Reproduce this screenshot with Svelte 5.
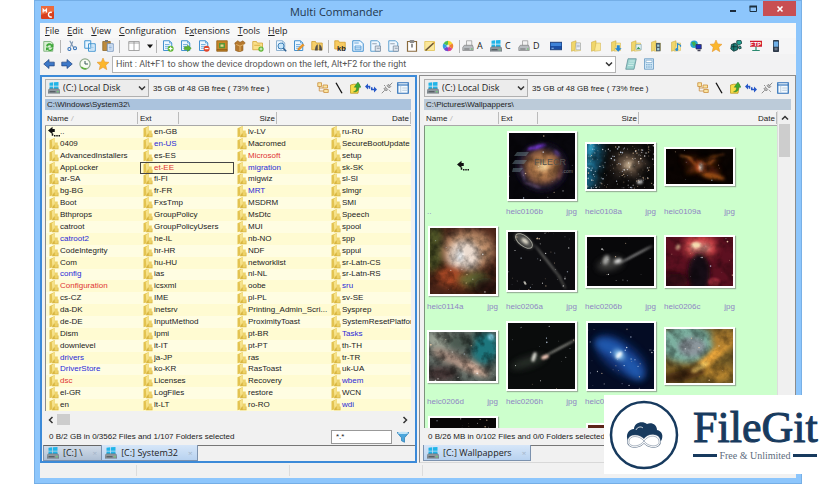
<script>
  const menus = ['File', 'Edit', 'View', 'Configuration', 'Extensions', 'Tools', 'Help'];

  const tools = [
    ['refresh', 'std'], ['sep'],
    ['cut', 'std'], ['copy', 'std'], ['paste', 'std'], ['sep'],
    ['panes', 'wide'], ['caret', 'thin'], ['sep'],
    ['pageAdd', 'std'], ['pageGo', 'std'], ['pageDel', 'std'], ['pack', 'std'], ['box', 'std'], ['folderAdd', 'std'], ['sep'],
    ['search', 'std'], ['pageEdit', 'std'], ['folderFind', 'std'], ['sep'],
    ['kb', 'std'], ['pageList', 'std'], ['pageCopy', 'std'], ['pageCopy', 'std'], ['clip', 'std'], ['wand', 'std'], ['wheel', 'std'], ['sep'],
    ['drive', 'drive', 'A'], ['winDrive', 'drive', 'C'], ['drive', 'drive', 'D'],
    ['screen', 'far'], ['fDoc', 'far'], ['fPlain', 'far'], ['fDown', 'far'], ['fPic', 'far'], ['fFilm', 'far'], ['fMusic', 'far'],
    ['net', 'far'], ['star', 'far'], ['reg', 'far'], ['ftp', 'far'], ['phone', 'far']
  ];

  const panelTools = ['tree', 'slash', 'up', 'swap', 'plug', 'view'];

  const blue = new Set(['en-US', 'migration', 'MRT', 'catroot2', 'config', 'drivers', 'DriverStore', 'sru', 'Tasks', 'wbem', 'wdi']);
  const red = new Set(['Microsoft', 'et-EE', 'Configuration', 'dsc']);

  const columns = [
    ['..', '0409', 'AdvancedInstallers', 'AppLocker', 'ar-SA', 'bg-BG', 'Boot', 'Bthprops', 'catroot', 'catroot2', 'CodeIntegrity', 'Com', 'config', 'Configuration', 'cs-CZ', 'da-DK', 'de-DE', 'Dism', 'downlevel', 'drivers', 'DriverStore', 'dsc', 'el-GR', 'en'],
    ['en-GB', 'en-US', 'es-ES', 'et-EE', 'fi-FI', 'fr-FR', 'FxsTmp', 'GroupPolicy', 'GroupPolicyUsers', 'he-IL', 'hr-HR', 'hu-HU', 'ias', 'icsxml', 'IME', 'inetsrv', 'InputMethod', 'Ipmi', 'it-IT', 'ja-JP', 'ko-KR', 'Licenses', 'LogFiles', 'lt-LT'],
    ['lv-LV', 'Macromed', 'Microsoft', 'migration', 'migwiz', 'MRT', 'MSDRM', 'MsDtc', 'MUI', 'nb-NO', 'NDF', 'networklist', 'nl-NL', 'oobe', 'pl-PL', 'Printing_Admin_Scri...', 'ProximityToast', 'pt-BR', 'pt-PT', 'ras', 'RasToast', 'Recovery', 'restore', 'ro-RO'],
    ['ru-RU', 'SecureBootUpdate', 'setup', 'sk-SK', 'sl-SI', 'slmgr', 'SMI', 'Speech', 'spool', 'spp', 'sppui', 'sr-Latn-CS', 'sr-Latn-RS', 'sru', 'sv-SE', 'Sysprep', 'SystemResetPlatform', 'Tasks', 'th-TH', 'tr-TR', 'uk-UA', 'wbem', 'WCN', 'wdi']
  ];

  // blobs: cx, cy, rx, ry, colour, opacity, rotation, blur
  const thumbs = [
    { up: true, name: '..' },
    { name: 'heic0106b', w: 66, h: 66, bg: '#08070c', stars: 12, seed: 3, tex: .35, mark: true, blobs: [
      [33, 34, 25, 24, '#1c1830', 1, 0, 3], [33, 34, 20, 18, '#6a4438', 1, 0, 3], [34, 34, 16, 14, '#b47a4c', 1, 0, 4], [34, 33, 6, 5, '#ffdca0', 1, 0, 3],
      [28, 14, 10, 2, '#7a3ae0', .9, -14, 1], [48, 20, 4, 2, '#6d4cb0', .7, 40, 1], [14, 40, 1, 8, '#9080c8', .7, -12, 1], [23, 52, 9, 1, '#a080b0', .6, 18, 1], [51, 40, 2, 7, '#804848', .7, 10, 1]] },
    { name: 'heic0108a', w: 67, h: 45, bg: '#100e0e', stars: 170, seed: 9, tex: .5, blobs: [
      [4, 18, 10, 34, '#12688c', .9, 10, 5], [3, 10, 3, 18, '#3ab0d8', .8, 5, 2], [42, 20, 16, 12, '#7c6450', .7, 0, 5], [42, 21, 5, 4, '#f4dcb8', .8, 0, 3], [53, 38, 3, 2, '#fff', .8, 0, 1]] },
    { name: 'heic0109a', w: 67, h: 35, bg: '#0a0402', stars: 8, seed: 4, tex: .5, blobs: [
      [36, 18, 20, 6, '#5c2408', .9, 24, 4], [36, 16, 18, 4, '#6c300c', .8, -24, 3], [46, 27, 13, 3, '#b05a18', .8, 12, 2], [20, 8, 7, 1, '#b06828', .8, 14, 1], [50, 7, 9, 1, '#904818', .7, -12, 1], [26, 12, 6, 1, '#b86424', .7, 44, 1], [45, 13, 5, 1, '#a85c20', .7, -44, 1],
      [35, 18, 5, 6, '#e0602c', .8, 0, 2], [35, 18, 2, 4, '#ffe8d8', 1, 0, 1]] },
    { name: 'heic0114a', w: 66, h: 66, bg: '#4a2418', stars: 14, seed: 7, tex: .45, blobs: [
      [4, 20, 10, 26, '#50602a', .8, 0, 4], [38, 22, 26, 20, '#c0906c', 1, 0, 5], [34, 28, 16, 16, '#ecdcd0', 1, 0, 4], [24, 50, 20, 10, '#b04c28', .9, 10, 4], [44, 52, 16, 8, '#5a7038', .8, 0, 4], [30, 28, 4, 6, '#fff', .9, 0, 2], [56, 58, 12, 8, '#20100c', .8, 0, 4]] },
    { name: 'heic0206a', w: 67, h: 58, bg: '#0d0d10', stars: 40, seed: 12, blobs: [
      [16, 9, 11, 5, '#5c5c58', .9, 38, 2], [17, 9, 4, 2, '#f0ead8', .9, 38, 1], [40, 30, 22, 1, '#80807c', .8, 52, 1], [54, 50, 8, 1, '#60605c', .8, 62, 1], [17, 51, 2, 1, '#e8e4d8', .9, 60, 0]] },
    { name: 'heic0206b', w: 67, h: 49, bg: '#08080a', stars: 16, seed: 15, blobs: [
      [48, 18, 20, 1, '#a0a0a0', .9, -28, 1], [23, 27, 13, 6, '#444442', .9, -14, 4], [19, 23, 3, 5, '#c8c8c4', .8, 20, 2], [31, 24, 4, 2, '#f0f0ee', 1, -20, 2]] },
    { name: 'heic0206c', w: 67, h: 49, bg: '#5c1020', stars: 14, seed: 20, tex: .3, blobs: [
      [34, 10, 17, 13, '#d8484c', .9, 0, 4], [34, 11, 11, 5, '#f0b0a0', .7, 0, 3], [33, 36, 11, 20, '#160a14', 1, 0, 3], [30, 8, 5, 3, '#f8e8b8', .9, 0, 1], [12, 10, 2, 3, '#f0c8a0', .8, 20, 1], [8, 44, 14, 8, '#300812', .9, 0, 3], [48, 45, 6, 4, '#a83040', .9, 0, 1]] },
    { name: 'heic0206d', w: 67, h: 49, bg: '#606a64', stars: 12, seed: 22, tex: .5, blobs: [
      [56, 16, 14, 16, '#187880', .9, 0, 4], [10, 8, 14, 10, '#a8b0a0', .8, 0, 4], [32, 10, 14, 7, '#4a5850', .9, 0, 3], [26, 28, 26, 6, '#b89888', .9, 24, 4], [46, 37, 15, 4, '#fcd0b8', 1, 26, 3], [12, 42, 16, 8, '#4c3838', .9, 0, 4], [62, 5, 3, 3, '#90e0f8', .8, 0, 1]] },
    { name: 'heic0206h', w: 67, h: 66, bg: '#0a0c0c', stars: 16, seed: 27, blobs: [
      [52, 25, 18, 1, '#a0a098', .9, -28, 1], [20, 39, 18, 5, '#2a302c', .9, -18, 4], [26, 34, 2, 5, '#d4d4cc', 1, 18, 1], [37, 34, 4, 2, '#f0c8b8', 1, -20, 1]] },
    { name: 'heic0301a', w: 66, h: 66, bg: '#040c24', stars: 34, seed: 31, blobs: [
      [33, 34, 30, 14, '#123c8c', .9, 38, 5], [22, 24, 16, 7, '#2460b8', .8, 20, 4], [44, 44, 16, 7, '#2460b8', .8, 50, 4], [31, 32, 6, 4, '#a8e0ff', 1, 40, 3], [31, 32, 2, 4, '#fff', .9, 40, 1]] },
    { name: 'heic0305a', w: 67, h: 54, bg: '#7a6028', stars: 8, seed: 35, tex: .35, blobs: [
      [20, 14, 28, 20, '#7cb0a0', 1, 0, 4], [26, 18, 14, 10, '#90909c', .8, 0, 3], [46, 28, 28, 5, '#f4ac3c', 1, -42, 3], [58, 10, 12, 9, '#b88430', .9, 0, 4], [18, 46, 24, 6, '#3c2408', .9, -14, 3], [52, 44, 14, 8, '#c89030', .8, 0, 3], [34, 38, 10, 3, '#f8d068', .9, -30, 2]] },
    { name: 'heic0307a', w: 66, h: 66, bg: '#080606', stars: 50, seed: 40, blobs: [] },
    { name: 'heic0312a', w: 66, h: 35, bg: '#0a0a0c', stars: 20, seed: 41, blobs: [] },
    { name: 'heic0401a', w: 66, h: 52, bg: '#5c2418', stars: 10, seed: 42, blobs: [] }
  ];

  function starField(t) {
    let s = t.seed * 7919 + 13;
    const next = () => ((s = (s * 16807) % 2147483647) / 2147483647);
    next();
    const tones = ['#ffffff', '#d8e8ff', '#ffdcb4'];
    return Array.from({ length: t.stars }, () => ({
      x: next() * t.w, y: next() * t.h, r: 0.25 + next() * 0.6, o: 0.3 + next() * 0.6, c: tones[Math.floor(next() * 3)]
    }));
  }
</script>

{#snippet page(color = '#3f8fd0')}
  <path d="M2 1h8l3 3v10H2z" fill="#eef7ff" stroke={color} stroke-width="1.3" />
  <path d="M10 1v3h3M4 6h6M4 8.500h6M4 11h4" fill="none" stroke={color} stroke-width=".9" />
{/snippet}

{#snippet folder()}
  <path d="M2 3l6-2v12l-6 2z" fill="#f0d66a" stroke="#c9a73c" stroke-width=".7" />
  <path d="M8 4h6v10l-8 1z" fill="#fbe998" stroke="#d3b54c" stroke-width=".7" />
{/snippet}

{#snippet winlogo()}
  <path d="M2 1l5-.6V5H2zM8 .3L14 0v5H8zM2 6h5v4.400L2 10zM8 6h6v5l-6-.5z" fill="#20b4e8" />
{/snippet}

{#snippet icon(kind)}
  <svg class="ico" viewBox="0 0 16 16" aria-hidden="true">
    {#if kind === 'refresh'}
      <path d="M1 2h9l3 2v11H1z" fill="#d9efd2" stroke="#6aa56a" />
      <path d="M4 8a4.500 4.500 0 0 1 8-2l2-1v5H9l2-2a3 3 0 0 0-5 1zM14 11a4.500 4.500 0 0 1-8 2l-2 1v-4h5l-2 2a3 3 0 0 0 5-1z" fill="#3fa83a" />
    {:else if kind === 'cut'}
      <path d="M5 1l5 9M9 2L6 9" stroke="#7c95b2" stroke-width="1.500" />
      <circle cx="4.500" cy="12" r="2" fill="none" stroke="#2f6db4" stroke-width="1.400" /><circle cx="12" cy="11" r="2" fill="none" stroke="#2f6db4" stroke-width="1.400" />
    {:else if kind === 'copy'}
      <path d="M1 1h8v10H1zM6 5h9v10H6z" fill="#eaf6ff" stroke="#3e93d0" stroke-width="1.300" />
      <path d="M8 8h5M8 10h5M8 12h5" stroke="#8cc0e6" />
    {:else if kind === 'paste'}
      <path d="M1 2h10v12H1z" fill="#bd8a3c" stroke="#8a6424" /><path d="M4 0h4v3H4z" fill="#777" />
      <path d="M7 5h8v10H7z" fill="#e3eefa" stroke="#5b83b4" /><path d="M9 8h4M9 10h4M9 12h4" stroke="#7aa2d0" />
    {:else if kind === 'panes'}
      <path d="M1 2h14v12H1z" fill="#fff" stroke="#8b8b8b" /><path d="M8 2v12M1 4h14" stroke="#8b8b8b" />
    {:else if kind === 'caret'}
      <path d="M4 6h8l-4 5z" fill="#111" />
    {:else if kind === 'pageAdd'}
      {@render page()}<circle cx="11.500" cy="11.500" r="4" fill="#5cb531" /><path d="M11.500 9v5M9 11.500h5" stroke="#fff" stroke-width="1.500" />
    {:else if kind === 'pageGo'}
      {@render page()}<path d="M6 9h4V6.500l5 4.500-5 4.500V13H6z" fill="#5cb531" stroke="#3a8a1c" stroke-width=".6" />
    {:else if kind === 'pageDel'}
      {@render page()}<circle cx="11.500" cy="11.500" r="4" fill="#e0442c" /><path d="M9 11.500h5" stroke="#fff" stroke-width="1.600" />
    {:else if kind === 'pack'}
      <path d="M1 1h14v14H1z" fill="#c68628" stroke="#8c5a14" /><path d="M4 4h8v7H4z" fill="#56963a" /><path d="M6 6h4v3H6z" fill="#e8d890" /><path d="M1 13h14" stroke="#7c4c10" />
    {:else if kind === 'box'}
      <path d="M1 4l4-3 3 2 4-2 3 3-3 3v7l-5 2-5-2V7z" fill="#b5782e" stroke="#855216" stroke-width=".7" /><path d="M3 6l5 2 5-2M8 8v7" fill="none" stroke="#f0c478" />
    {:else if kind === 'folderAdd'}
      <path d="M1 2h5l1 2h7v9H1z" fill="#fae08a" stroke="#d0a030" /><path d="M3 7h8" stroke="#d0a030" /><circle cx="12" cy="12" r="3.500" fill="#5cb531" /><path d="M12 10v4M10 12h4" stroke="#fff" />
    {:else if kind === 'search'}
      {@render page('#8ab0d0')}<circle cx="8" cy="8" r="4" fill="#c9e6fa" stroke="#3d7fb8" stroke-width="1.300" /><path d="M11 11l4 4" stroke="#2d5f90" stroke-width="2" />
    {:else if kind === 'pageEdit'}
      {@render page()}<path d="M7 11l6-6 2 2-6 6-3 1z" fill="#f09a28" stroke="#b86a10" stroke-width=".5" />
    {:else if kind === 'folderFind'}
      <path d="M1 2h5l1 2h8v9H1z" fill="#f5cf6a" stroke="#c99a2c" /><path d="M6 9l2-3h1v8H5zM14 9l-2-3h-1v8h4z" fill="#55514a" />
    {:else if kind === 'kb'}
      <path d="M1 1h5l1 2h8v9H1z" fill="#f7cb62" stroke="#cf9b2a" /><text x="4" y="14" font-size="10" font-weight="700" fill="#222">kb</text>
    {:else if kind === 'pageList'}
      <path d="M1 1h10l4 4v10H1z" fill="#eef7ff" stroke="#3f8fd0" stroke-width="1.300" /><path d="M4 8h8v5H4zM4 10.500h8M3 4h6" fill="none" stroke="#3f8fd0" />
    {:else if kind === 'pageCopy'}
      <path d="M1 1h9l3 3v11H1z" fill="#eef7ff" stroke="#4f97cc" stroke-width="1.200" /><path d="M7 8h7v7H7z" fill="#dfe6ee" stroke="#77879a" /><path d="M9 11h4M3 5h6" stroke="#77879a" />
    {:else if kind === 'clip'}
      <path d="M2 2h12v13H2z" fill="#fff" stroke="#8a6a3c" stroke-width="1.600" /><path d="M5 0h6v4H5z" fill="#8c8c8c" /><path d="M8 5v5" stroke="#333" stroke-width="1.400" />
    {:else if kind === 'wand'}
      <path d="M1 2h13v12H1z" fill="#fbe79a" stroke="#e0c04e" /><path d="M2 14L13 4" stroke="#6b5636" stroke-width="2.200" /><path d="M11 1l1 2 3 0-2 2" fill="#f0a020" />
    {:else if kind === 'wheel'}
      <path d="M8 8V1a7 7 0 0 1 6 3.500z" fill="#f2d52c" /><path d="M8 8l6-3.500a7 7 0 0 1 0 7z" fill="#f08030" /><path d="M8 8l6 3.500A7 7 0 0 1 8 15z" fill="#d84090" />
      <path d="M8 8v7a7 7 0 0 1-6-3.500z" fill="#7048d0" /><path d="M8 8l-6 3.500a7 7 0 0 1 0-7z" fill="#30a0e0" /><path d="M8 8L2 4.500A7 7 0 0 1 8 1z" fill="#50c050" /><circle cx="8" cy="8" r="2" fill="#fff" opacity=".7" />
    {:else if kind === 'drive'}
      <path d="M6 1h7v7H6z" fill="#f2f2f2" stroke="#999" /><path d="M1 10l2-3h11l1 3v4H1z" fill="#b8bcc0" stroke="#777" stroke-width=".8" /><path d="M3 12h7" stroke="#555" /><path d="M12 12h2" stroke="#3c3" />
    {:else if kind === 'winDrive'}
      {@render winlogo()}<path d="M0 11l2-2h12l2 2v4H0z" fill="#8e979e" stroke="#5b646a" stroke-width=".6" /><path d="M2 13h8" stroke="#30373c" /><path d="M12 13h2" stroke="#5f5" />
    {:else if kind === 'screen'}
      <path d="M0 3h16v10H0z" fill="#1c4fa4" stroke="#17376c" /><path d="M1 4h14v4H1z" fill="#3f83d8" /><path d="M2 11h3" stroke="#bfe0ff" />
    {:else if kind === 'fDoc'}
      {@render folder()}<path d="M8 4h6v9H8z" fill="#eef2f8" stroke="#9aa6b8" stroke-width=".8" /><path d="M9 7h4M9 9h4" stroke="#9aa6b8" />
    {:else if kind === 'fPlain'}
      {@render folder()}
    {:else if kind === 'fDown'}
      {@render folder()}<path d="M9 7h4v4h2.500L11 15.500 6.500 11H9z" fill="#2585d4" />
    {:else if kind === 'fPic'}
      {@render folder()}<path d="M8 6h7v7H8z" fill="#dff0f4" stroke="#7aa0a8" stroke-width=".8" /><path d="M9 12l2-3 3 3z" fill="#3c9a58" />
    {:else if kind === 'fFilm'}
      {@render folder()}<path d="M8 4h6v11H8z" fill="#4c5c66" /><path d="M9.500 6h3v3h-3zM9.500 10.500h3v3h-3z" fill="#a8d0d8" />
    {:else if kind === 'fMusic'}
      {@render folder()}<path d="M10 12V5l4 2v2" fill="none" stroke="#2a8ad0" stroke-width="1.600" /><circle cx="9" cy="12.500" r="2" fill="#2a8ad0" />
    {:else if kind === 'net'}
      <circle cx="5.500" cy="5.500" r="5" fill="#28a4d0" /><path d="M2 3l4-1 2 3-3 4z" fill="#3eb04c" /><path d="M8 6h7v6H8z" fill="#1b2fc0" stroke="#334" /><path d="M10 14h4" stroke="#445" stroke-width="2" />
    {:else if kind === 'star'}
      <path d="M8 0l2.300 5.200 5.700.6-4.300 3.800L13 15.500 8 12.400 3 15.500l1.300-5.900L0 5.800l5.700-.6z" fill="#fbb62c" stroke="#e3922a" stroke-width=".7" />
    {:else if kind === 'reg'}
      <path d="M2 6l5-2 3 3v6l-5 2-4-3z" fill="#1d7d78" stroke="#0a2c2c" /><path d="M9 1l5-1 2 4-4 3-3-2zM11 9l3-1 1 3-3 1z" fill="#26a496" stroke="#0a2c2c" /><path d="M2 9h7M5 5v9" stroke="#0a2c2c" />
    {:else if kind === 'ftp'}
      <path d="M0 1h16v8H0z" fill="#d01c30" /><text x="0" y="8" font-size="8" font-weight="700" fill="#fff">FTP</text><path d="M8 9v5M3 14h10" stroke="#2b8a70" stroke-width="1.600" />
    {:else if kind === 'phone'}
      <rect x="4" y="0" width="8" height="16" rx="1" fill="#2c3848" /><path d="M5 2h6v7H5z" fill="#6fb0e8" /><path d="M6 11h4M6 13h4" stroke="#9ab" />
    {:else if kind === 'back'}
      <path d="M1 8l7-6v3.500h7v5H8V14z" fill="#3d78c8" stroke="#1d3e7c" stroke-width=".9" />
    {:else if kind === 'forward'}
      <path d="M15 8L8 2v3.500H1v5h7V14z" fill="#3d78c8" stroke="#1d3e7c" stroke-width=".9" />
    {:else if kind === 'clock'}
      <circle cx="8" cy="8" r="6.800" fill="#f7fbf2" stroke="#8ca888" stroke-width="1.500" /><path d="M8 4v4h4" fill="none" stroke="#355" stroke-width="1.300" /><path d="M3 12a6.800 6.800 0 0 0 7 2" fill="none" stroke="#5db33c" stroke-width="2" />
    {:else if kind === 'note'}
      <path d="M4 1h11l-3 14H1z" fill="#9ed4d0" stroke="#5a8c94" /><path d="M6 4h7M5 7h7M4 10h7" stroke="#d9f2f0" />
    {:else if kind === 'calc'}
      <path d="M2 1h12v14H2z" fill="#cfe6f6" stroke="#5d93bd" /><path d="M4 3h8v3H4z" fill="#fff" stroke="#5d93bd" stroke-width=".7" /><path d="M4 9h8M4 12h8" stroke="#6ea2c8" stroke-width="1.500" stroke-dasharray="2 1" />
    {:else if kind === 'tree'}
      <path d="M1 1h5v5H1zM8 4h6v4H8zM9 10h6v4H9z" fill="#fbe6a4" stroke="#c88a34" /><path d="M3 6v6h6M3 8h5" fill="none" stroke="#c88a34" />
    {:else if kind === 'slash'}
      <path d="M4 1l8 14" stroke="#111" stroke-width="1.700" />
    {:else if kind === 'up'}
      <path d="M2 4l4-1h8l-2 12H2z" fill="#f7dc48" stroke="#b89420" /><path d="M6 13c4-1 4-4 4-6H7l5-7 4 7h-3c0 4-2 7-7 6z" fill="#39a835" stroke="#1c6c1c" stroke-width=".5" />
    {:else if kind === 'swap'}
      <path d="M0 6l4-4v3h3v4H5V7H4v3zM16 10l-4 4v-3H8V7h2v2h2V6z" fill="#2456c8" />
    {:else if kind === 'plug'}
      <path d="M1 15l4-4M11 5l4-4M4 9l3 3 2-2-3-3zM8 5l3 3 2-2-3-3zM4 4l2 2M11 11l2 2" fill="#b9b9b9" stroke="#858585" stroke-width="1.200" />
    {:else if kind === 'view'}
      <path d="M1 1h14v14H1z" fill="#f4faff" stroke="#2c6fb8" stroke-width="1.600" /><path d="M1 4h14" stroke="#2c6fb8" stroke-width="1.500" /><path d="M5 5v9M7 8h7M7 11h7" stroke="#a8bfd4" />
    {:else if kind === 'folder'}
      <path d="M2 3l7-3v13l-7 2z" fill="#e3c350" /><path d="M5 3l4-3v12l-3 2z" fill="#f6e28a" /><path d="M8 10h6v5H5z" fill="#d9b640" /><path d="M9 6h4v8H9z" fill="#edd26a" />
    {:else if kind === 'funnel'}
      <path d="M0 2h16l-6 7v6l-4-2V9z" fill="#4aa6dc" stroke="#2b7db4" /><ellipse cx="8" cy="2.500" rx="7" ry="1.500" fill="#bfe4f8" />
    {:else if kind === 'parent'}
      <path d="M0 6l6-5v3h3v4H6v3zM8 12h2v2H8zM11 12h2v2h-2zM14 12h2v2h-2zM5 10h2v3H5z" fill="#111" />
    {/if}
  </svg>
{/snippet}

{#snippet chevron()}
  <svg class="chev" viewBox="0 0 8 8" aria-hidden="true"><path d="M1 2.500l3 3 3-3" fill="none" stroke="#333" stroke-width="1.500" /></svg>
{/snippet}

{#snippet driveRow(id)}
  <div class="driverow">
    <div class="combo">
      {@render icon('winDrive')}
      <select {id} aria-label="Device"><option>(C:) Local Disk</option></select>
      {@render chevron()}
    </div>
    <span class="free">35 GB of 48 GB free ( 73% free )</span>
    <div class="ptools">
      {#each panelTools as t}<button aria-label={t}>{@render icon(t)}</button>{/each}
    </div>
  </div>
{/snippet}

{#snippet heads(cls)}
  <div class="heads {cls}">
    <button class="hname">Name <i>/</i></button><button class="hext">Ext</button><button class="hsize">Size</button><button class="hdate">Date</button>
  </div>
{/snippet}

<div class="window">
  <header class="title">
    <svg class="app" viewBox="0 0 12 12" aria-hidden="true">
      <rect width="12" height="12" rx="1" fill="#d8401c" /><path d="M0 0h12v5L0 8z" fill="#ec6a3c" />
      <path d="M2 6V3l1.500 1.500L5 3v3" fill="none" stroke="#fff" stroke-width="1.200" /><path d="M10 6a2.200 2.200 0 1 0 0 4" fill="none" stroke="#fff" stroke-width="1.300" />
    </svg>
    <h1>Multi Commander</h1>
    <div class="winbtns">
      <button aria-label="Minimize"><svg viewBox="0 0 10 8"><path d="M2 6h6" stroke="#1b2b3c" stroke-width="2" /></svg></button>
      <button aria-label="Maximize"><svg viewBox="0 0 10 8"><path d="M2 1.500h6.500v5H2z" fill="none" stroke="#1b3040" /><path d="M1.500 1.500h7.500" stroke="#1b3040" stroke-width="2" /></svg></button>
      <button class="close" aria-label="Close"><svg viewBox="0 0 10 8"><path d="M2.500 1.500l5 5M7.500 1.500l-5 5" stroke="#fff" stroke-width="1.600" /></svg></button>
    </div>
  </header>

  <div class="client">
    <nav class="menu">
      {#each menus as m}
        <button>{#if m === 'Extensions'}E<u>x</u>tensions{:else}<u>{m[0]}</u>{m.slice(1)}{/if}</button>
      {/each}
    </nav>

    <div class="toolbar">
      {#each tools as [kind, size, label]}
        {#if kind === 'sep'}
          <span class="sep"></span>
        {:else}
          <button class={size} aria-label={label ? `Drive ${label}` : kind}>{@render icon(kind)}{#if label}<span>{label}</span>{/if}</button>
        {/if}
      {/each}
    </div>

    <div class="address">
      {#each ['back', 'forward', 'clock', 'star'] as k}<button class="std" aria-label={k}>{@render icon(k)}</button>{/each}
      <div class="hint">
        <select aria-label="Command line"><option>Hint : Alt+F1 to show the device dropdown on the left, Alt+F2 for the right</option></select>
        {@render chevron()}
      </div>
      {#each ['note', 'calc'] as k}<button class="std" aria-label={k}>{@render icon(k)}</button>{/each}
    </div>

    <main class="panels">
      <section class="panel active">
        {@render driveRow('dev-left')}
        <div class="path">C:\Windows\System32\</div>
        {@render heads('hl')}
        <div class="files">
          {#each columns as col}
            <ul>
              {#each col as f}
                <li class:blue={blue.has(f)} class:red={red.has(f)} class:cursor={f === 'et-EE'}>
                  {@render icon(f === '..' ? 'parent' : 'folder')}<span>{f}</span>
                </li>
              {/each}
            </ul>
          {/each}
        </div>
        <div class="hscroll">
          <svg viewBox="0 0 8 8" aria-hidden="true"><path d="M5.500 1l-3 3 3 3" fill="none" stroke="#333" stroke-width="1.500" /></svg>
          <span class="hthumb"></span>
          <svg class="end" viewBox="0 0 8 8" aria-hidden="true"><path d="M2.500 1l3 3-3 3" fill="none" stroke="#333" stroke-width="1.500" /></svg>
        </div>
        <div class="info">
          <span>0 B/2 GB in 0/3562 Files and 1/107 Folders selected</span>
          <input aria-label="Filter" value="*.*" />
          <button aria-label="Apply filter">{@render icon('funnel')}</button>
        </div>
        <div class="tabs">
          <button class="tab off">{@render icon('winDrive')}<span>[C:] \</span><b>×</b></button>
          <button class="tab">{@render icon('winDrive')}<span>[C:] System32</span><b>×</b></button>
          <span class="rest"></span>
        </div>
      </section>

      <section class="panel">
        {@render driveRow('dev-right')}
        <div class="path dim">C:\Pictures\Wallpappers\</div>
        <div class="body">
          <div class="listcol">
            {@render heads('hr')}
            <div class="thumbs">
              {#each thumbs as t, i}
                <figure>
                  <div class="frame">
                    {#if t.up}
                      {@render icon('parent')}
                    {:else}
                      <svg class="pic" width={t.w} height={t.h} viewBox="0 0 {t.w} {t.h}" role="img" aria-label={t.name}>
                        <defs>
                          {#each [0, 1, 2, 3, 4, 5] as b}
                            <filter id="b{i}-{b}" x="-100%" y="-300%" width="300%" height="700%"><feGaussianBlur stdDeviation={b * 0.8} /></filter>
                          {/each}
                          <filter id="t{i}" x="0" y="0" width="100%" height="100%">
                            <feTurbulence type="fractalNoise" baseFrequency="0.09" numOctaves="4" seed={t.seed} />
                            <feColorMatrix type="matrix" values="0 0 0 0 0  0 0 0 0 0  0 0 0 0 0  2.6 0 0 0 -1" />
                          </filter>
                        </defs>
                        <rect width={t.w} height={t.h} fill={t.bg} />
                        {#each t.blobs as [cx, cy, rx, ry, c, o, rot, bl]}
                          <ellipse {cx} {cy} {rx} {ry} fill={c} opacity={o} transform="rotate({rot} {cx} {cy})" filter="url(#b{i}-{bl})" />
                        {/each}
                        {#if t.name === 'heic0206a'}
                          <ellipse cx="16" cy="9" rx="10" ry="5" fill="none" stroke="#a0a096" stroke-width="1" transform="rotate(38 16 9)" />
                        {/if}
                        {#if t.tex}<rect width={t.w} height={t.h} filter="url(#t{i})" opacity={t.tex} />{/if}
                        {#each starField(t) as s}<circle cx={s.x} cy={s.y} r={s.r} fill={s.c} opacity={s.o} />{/each}
                        {#if t.mark}
                          <path d="M8 19h12l-3 4H5zM6 27h12l-3 4H3zM4 35h10l-3 4H3z" fill="#7c9aa0" opacity=".4" />
                          <text x="25" y="32" font-size="9" fill="#55504c">FILECR</text>
                          <text x="53" y="40" font-size="5" fill="#777">.com</text>
                        {/if}
                      </svg>
                    {/if}
                  </div>
                  <figcaption><span>{t.name}</span>{#if !t.up}<span>jpg</span>{/if}</figcaption>
                </figure>
              {/each}
            </div>
          </div>
          <div class="vscroll"><svg viewBox="0 0 8 8" aria-hidden="true"><path d="M1 5.500l3-3 3 3" fill="none" stroke="#333" stroke-width="1.500" /></svg><span></span></div>
        </div>
        <div class="info"><span>0 B/26 MB in 0/102 Files and 0/0 Folders selected</span></div>
        <div class="tabs">
          <button class="tab">{@render icon('winDrive')}<span>[C:] Wallpappers</span><b>×</b></button>
          <span class="rest"></span>
        </div>
      </section>
    </main>

    <footer class="status"><span></span><span></span><span></span></footer>
  </div>
</div>

<aside class="brand">
  <svg viewBox="0 0 72 72" aria-hidden="true">
    <circle cx="36" cy="36" r="33" fill="#fff" stroke="#173a5e" stroke-width="2.500" />
    <path d="M20 42c-3-7 1-12 6-12 0-6 8-9 13-5 5-2 10 1 10 6 5 1 7 6 4 11z" fill="#173a5e" />
    <path d="M28 31c1-3 5-4 7-2" fill="none" stroke="#fff" stroke-width=".8" />
    <path d="M36 42c-5-6-14-6-15 0s10 7 15 0 14-6 15 0-10 7-15 0z" fill="#fff" stroke="#5c7088" stroke-width="3.600" />
    <path d="M36 42c-5-6-14-6-15 0s10 7 15 0 14-6 15 0-10 7-15 0z" fill="#fff" stroke="#fff" stroke-width="2.600" />
    <path d="M36 42c-5-6-14-6-15 0s10 7 15 0 14-6 15 0-10 7-15 0z" fill="none" stroke="#5c7088" stroke-width=".5" />
  </svg>
  <div class="words">
    <strong>FileGit</strong>
    <div class="tagline"><i></i><span>Free &amp; Unlimited</span><i></i></div>
  </div>
</aside>

<style>
  :global(body) { background: #fff; }
  * { box-sizing: border-box; }
  button, select, input { font: inherit; color: inherit; margin: 0; padding: 0; border: 0; background: none; border-radius: 0; }
  button { display: flex; align-items: center; justify-content: center; white-space: nowrap; }
  select { appearance: none; }
  ul { list-style: none; margin: 0; padding: 0; }
  svg { display: block; flex: none; }
  .ico { width: 12px; height: 12px; font-family: "Liberation Sans", Arial, sans-serif; }

  .window {
    height: 100vh; margin: 0 34px; padding: 0 6px 5px; display: flex; flex-direction: column;
    background: #8dc6fc; border: solid #74aee6; border-width: 1px 0; box-shadow: inset 1px 0 #78b0e6, inset -1px 0 #78b0e6;
    font: 8px/11px "Liberation Sans", Arial, sans-serif; color: #222;
  }
  .title { height: 22px; display: flex; align-items: center; flex: none; }
  .app { width: 13px; height: 13px; margin-left: 1px; }
  h1 { flex: 1; margin: 0; text-align: center; font: 11px/20px "Open Sans", "Noto Sans", sans-serif; color: #22364c; padding-right: 104px; }
  .winbtns { display: flex; align-self: flex-start; }
  .winbtns button { width: 20px; height: 15px; }
  .winbtns svg { width: 10px; height: 8px; }
  .winbtns .close { width: 33px; background: #c84f52; }

  .client { flex: 1; min-height: 0; display: flex; flex-direction: column; background: #f2f2f3; }
  .menu { height: 15px; display: flex; gap: 8px; padding-left: 5px; background: #f8f8f8; font: 9px/14px "Open Sans", "Noto Sans", sans-serif; flex: none; }
  u { text-underline-offset: 1px; }
  .toolbar { height: 16px; display: flex; align-items: center; background: #f5f5f6; flex: none; overflow: hidden; }
  .toolbar button, .address button { height: 16px; flex: none; }
  .std { width: 18px; }
  .wide { width: 24px; }
  .thin { width: 8px; }
  .far { width: 20px; }
  .toolbar .drive { width: 28px; gap: 3px; justify-content: flex-start; font: 9px/12px "Open Sans", "Noto Sans", sans-serif; }
  .sep { width: 1px; height: 13px; margin: 0 2px; background: #b5b5b5; flex: none; }
  .address { height: 21px; display: flex; align-items: center; flex: none; padding-bottom: 1px; }
  .hint { width: 504px; height: 17px; position: relative; background: #fff; border: 1px solid #b4b4b4; margin-right: 6px; }
  .hint select { width: 100%; height: 100%; padding-left: 3px; font: 9px/15px Roboto, "Open Sans", sans-serif; color: #555; }
  .chev { position: absolute; right: 2px; top: 50%; margin-top: -4px; width: 8px; height: 8px; pointer-events: none; }

  .panels { flex: 1; min-height: 0; display: grid; grid-template-columns: 1fr 1fr; gap: 2px; }
  .panel { min-width: 0; min-height: 0; display: flex; flex-direction: column; background: #f1f1f1; border: 1px solid #8c8c8c; border-bottom-color: #d8d8d8; padding: 1px 4px; }
  .panel.active { border: 2px solid #3c8ad8; padding: 0 4px 0 3px; }
  .driverow { height: 22px; display: flex; align-items: center; flex: none; }
  .combo { width: 104px; height: 18px; position: relative; display: flex; align-items: center; border: 1px solid #b0b0b0; background: #ececec; padding-left: 2px; }
  .combo select { flex: 1; min-width: 0; height: 16px; padding-left: 3px; font: 9px/14px "Open Sans", "Noto Sans", sans-serif; }
  .free { margin-left: 4px; white-space: nowrap; }
  .ptools { margin-left: auto; display: flex; }
  .ptools button { width: 16px; height: 16px; }
  .path { height: 11px; margin-bottom: 1px; padding-left: 2px; background: #abc3dd; flex: none; white-space: nowrap; }
  .path.dim { background: #bccbd9; }

  .heads { height: 15px; display: flex; background: #f3f3f3; border-bottom: 1px solid #a8a8a8; flex: none; }
  .heads button { border-right: 1px solid #bbb; margin: 1px 0; justify-content: flex-start; padding: 0 1px 0 2px; }
  .heads i { color: #aaa; margin-left: 3px; font-size: 7px; }
  .hl .hname { width: 93px; }
  .hl .hext { width: 41px; }
  .hl .hsize { width: 98px; justify-content: flex-end; }
  .hr .hname { width: 75px; }
  .hr .hext { width: 39px; }
  .hr .hsize { width: 101px; justify-content: flex-end; }
  .heads .hdate { flex: 1; justify-content: flex-end; }

  .files { flex: 1; min-height: 0; display: grid; grid-template-columns: repeat(4, 94px); overflow: hidden; background: #fffcd8; border-left: 1px solid #8c8c8c; }
  .files ul { display: grid; grid-template-rows: repeat(24, 1fr); min-height: 0; }
  li { display: flex; align-items: center; padding-left: 2px; min-height: 0; white-space: nowrap; overflow: hidden; line-height: 10px; }
  li:nth-child(odd) { background: #fffde2; }
  li:nth-child(even) { background: #fffbd2; }
  .blue { color: #2a2ad8; }
  .red { color: #e03434; }
  .cursor { outline: 1px solid #444; outline-offset: -1px; }

  .hscroll { height: 17px; display: flex; align-items: center; padding: 0 2px; flex: none; }
  .hscroll svg { width: 8px; height: 8px; }
  .hthumb { width: 13px; height: 11px; background: #cdcdcd; margin-left: 2px; }
  .hscroll .end { margin-left: auto; }
  .info { height: 17px; display: flex; align-items: center; padding-left: 4px; flex: none; white-space: nowrap; }
  .info input { width: 61px; height: 14px; margin-left: auto; padding-left: 4px; border: 1px solid #999; background: #fff; }
  .info button { width: 16px; height: 16px; margin-left: 3px; }

  .tabs { height: 16px; margin: 0 -4px 0 -2px; display: flex; align-items: stretch; flex: none; }
  .panel:not(.active) .tabs { margin-left: -1px; }
  .tab { gap: 4px; padding: 0 4px 0 3px; background: linear-gradient(#d6e6f8, #b8d2f0); border: 1px solid #7c92ae; border-top: 0; font: 9px/14px "Open Sans", "Noto Sans", sans-serif; }
  .tab.off { background: linear-gradient(#d2dce8, #aebfd4); border-top: 1px solid #666; border-right: 0; }
  .tab b { font-weight: 400; font-size: 8px; color: #a4b4c8; margin-left: 6px; }
  .rest { flex: 1; border-top: 1px solid #777; }

  .body { flex: 1; min-height: 0; display: flex; }
  .listcol { flex: 1; min-width: 0; display: flex; flex-direction: column; }
  .thumbs { flex: 1; min-height: 0; overflow: hidden; background: #ccffcc; border-left: 1px solid #7c947c; display: grid; grid-template-columns: repeat(4, 71px); grid-auto-rows: 88px; gap: 7px 8px; padding: 2px; align-content: start; }
  figure { margin: 0; }
  .frame { height: 76px; display: flex; align-items: center; justify-content: center; }
  .pic { box-sizing: content-box; border: 2px solid #fff; box-shadow: 1px 1px 1px #9ab49a; font-family: "Liberation Sans", Arial, sans-serif; }
  figcaption { height: 12px; display: flex; justify-content: space-between; color: #8f86c4; padding-top: 3px; line-height: 10px; }
  .vscroll { width: 14px; background: #f0f0f0; display: flex; flex-direction: column; align-items: center; gap: 2px; padding-top: 3px; border-left: 1px solid #ddd; }
  .vscroll svg { width: 8px; height: 8px; }
  .vscroll span { width: 11px; height: 33px; background: #cdcdcd; }

  .status { height: 15px; display: flex; flex: none; background: #f1f1f1; }
  .status span { border-right: 1px solid #dcdcdc; margin: 2px 0; width: 97px; }
  .status span + span { width: 153px; }
  .status span + span + span { width: 133px; }

  .brand { position: absolute; right: 0; bottom: 10px; width: 232px; height: 79px; display: flex; align-items: center; background: #fff; padding-left: 4px; gap: 13px; color: #173a5e; font-family: "Liberation Serif", "Times New Roman", serif; }
  .brand svg { width: 72px; height: 72px; }
  .words { width: 124px; }
  strong { display: block; font-size: 44px; line-height: 42px; font-weight: 400; -webkit-text-stroke: 1px #173a5e; }
  .tagline { display: flex; align-items: center; gap: 2px; font-size: 10px; line-height: 14px; color: #5c6b7c; white-space: nowrap; }
  .tagline i { flex: 1; height: 3px; background: #173a5e; }
</style>
